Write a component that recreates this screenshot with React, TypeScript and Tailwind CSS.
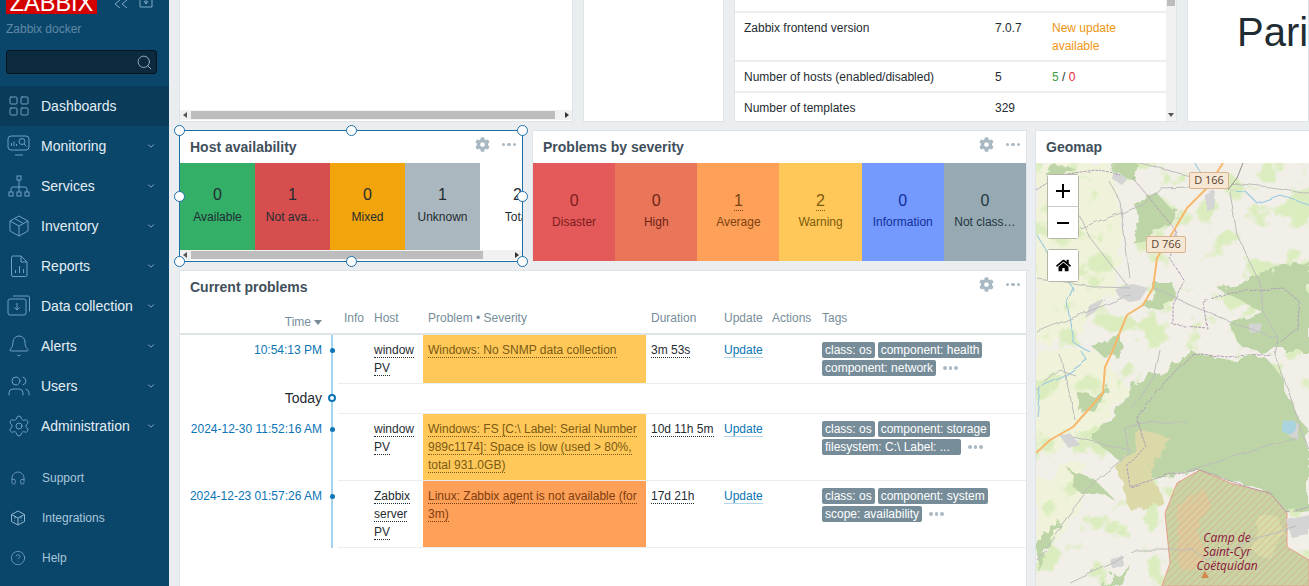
import type { ReactNode } from "react";
import { Bell, ChevronDown, CircleHelp, Headphones, LayoutGrid, Search, Settings, Users } from "lucide-react";
import { FaCog, FaHome } from "react-icons/fa";

const iconColor = "#6f9fc0";

function Monitoring() {
  return (
    <svg width="24" height="24" viewBox="0 0 24 24" fill="none" stroke={iconColor} strokeWidth="1">
      <rect x="1" y="2" width="21" height="14" rx="3" />
      <path d="M8 21h8M4.500 12V9M7 12V7.500M9.500 12v-2" />
      <circle cx="15" cy="7.500" r="3" />
      <path d="M17 10l2.500 2.500" />
    </svg>
  );
}

function ServicesIcon() {
  return (
    <svg width="24" height="24" viewBox="0 0 24 24" fill="none" stroke={iconColor} strokeWidth="1">
      <rect x="10" y="2" width="4" height="4" />
      <rect x="2" y="18" width="4" height="4" />
      <rect x="10" y="18" width="4" height="4" />
      <rect x="18" y="18" width="4" height="4" />
      <path d="M12 6v12M4 18v-3a2 2 0 0 1 2-2h12a2 2 0 0 1 2 2v3" />
    </svg>
  );
}

function InventoryIcon() {
  return (
    <svg width="24" height="24" viewBox="0 0 24 24" fill="none" stroke={iconColor} strokeWidth="1">
      <path d="M12 2l9 5v10l-9 5-9-5V7zM3 7l9 5 9-5M12 12v10M7.500 4.500l9 5" />
    </svg>
  );
}

function ReportsIcon() {
  return (
    <svg width="24" height="24" viewBox="0 0 24 24" fill="none" stroke={iconColor} strokeWidth="1">
      <path d="M6 2h8l6 6v13a1.500 1.500 0 0 1-1.500 1.500h-12.500a1.500 1.500 0 0 1-1.500-1.500v-17.500a1.500 1.500 0 0 1 1.500-1.500zM14 2v6h6M8.500 19v-3M12.500 19v-7M16.500 19v-4" />
    </svg>
  );
}

function DataIcon() {
  return (
    <svg width="24" height="24" viewBox="0 0 24 24" fill="none" stroke={iconColor} strokeWidth="1">
      <rect x="1" y="5" width="18" height="16" rx="2" />
      <path d="M6 2h15a1.500 1.500 0 0 1 1.500 1.500v14M10 9v7M7.500 13.500l2.500 2.500 2.500-2.500" />
    </svg>
  );
}

function IntegrationsIcon() {
  return (
    <svg width="18" height="18" viewBox="0 0 18 18" fill="none" stroke="#8fb5cf" strokeWidth="1">
      <path d="M9 2l6.500 3.500v7L9 16l-6.500-3.500v-7zM2.500 5.500L9 9l6.500-3.500M9 9v7M6 7v2.500M12 7v2.500M5 11.500h.5M12.500 11.500h.5" />
    </svg>
  );
}

const navItems: { label: string; icon: ReactNode; active?: boolean }[] = [
  { label: "Dashboards", icon: <LayoutGrid size={24} color={iconColor} strokeWidth={1} />, active: true },
  { label: "Monitoring", icon: <Monitoring /> },
  { label: "Services", icon: <ServicesIcon /> },
  { label: "Inventory", icon: <InventoryIcon /> },
  { label: "Reports", icon: <ReportsIcon /> },
  { label: "Data collection", icon: <DataIcon /> },
  { label: "Alerts", icon: <Bell size={24} color={iconColor} strokeWidth={1} /> },
  { label: "Users", icon: <Users size={24} color={iconColor} strokeWidth={1} /> },
  { label: "Administration", icon: <Settings size={24} color={iconColor} strokeWidth={1} /> },
];

function Sidebar() {
  return (
    <aside className="flex h-[586px] w-[169px] shrink-0 flex-col bg-[#0a466a]">
      <div className="flex h-[14px] items-start">
        <div className="ml-[6px] flex h-[14px] w-[91px] items-end justify-center overflow-hidden bg-[#d40000]">
          <span className="mb-[-1px] text-[23.5px] leading-none text-white">ZABBIX</span>
        </div>
        <svg className="ml-[17px]" width="14" height="8" viewBox="0 0 14 8" fill="none" stroke="#7ea6c2" strokeWidth="1">
          <path d="M6 0L1 4l5 4M13 0L8 4l5 4" />
        </svg>
        <svg className="ml-[11px]" width="14" height="8" viewBox="0 0 14 8" fill="none" stroke="#7ea6c2" strokeWidth="1">
          <path d="M1 0v7h12V0M7 4V0M5 1l2 3 2-3" />
        </svg>
      </div>
      <div className="ml-[6px] mt-[6px] h-[18px] text-xs leading-[18px] text-[#5f89a6]">Zabbix docker</div>
      <div className="ml-[6px] mt-[12px] flex h-[24px] w-[151px] items-center justify-end rounded-[3px] border border-[#02141f] bg-[#0b2a3e] pr-[3px]">
        <Search size={17} color="#9fb8c9" strokeWidth={1.25} />
      </div>
      <nav className="mt-[12px]">
        {navItems.map((item) => (
          <div key={item.label} className={`flex h-[40px] items-center ${item.active ? "bg-[#093c5b]" : ""}`}>
            <span className="flex w-[41px] shrink-0 justify-center pr-[3px]">{item.icon}</span>
            <span className="flex-1 text-sm text-[#e4eef5]">{item.label}</span>
            {!item.active && <ChevronDown className="mr-[13px]" size={10} color="#9dbcd1" strokeWidth={2} />}
          </div>
        ))}
      </nav>
      <div className="mt-[12px] text-xs text-[#a9c6da]">
        <div className="flex h-[40px] items-center">
          <span className="flex w-[42px] justify-center pr-[6px]"><Headphones size={16} color="#8fb5cf" strokeWidth={1} /></span>
          Support
        </div>
        <div className="flex h-[40px] items-center">
          <span className="flex w-[42px] justify-center pr-[6px]"><IntegrationsIcon /></span>
          Integrations
        </div>
        <div className="flex h-[40px] items-center">
          <span className="flex w-[42px] justify-center pr-[6px]"><CircleHelp size={16} color="#8fb5cf" strokeWidth={1} /></span>
          Help
        </div>
      </div>
    </aside>
  );
}

function Dots({ color = "#a9b9c3" }: { color?: string }) {
  return (
    <span className="flex gap-[2px]">
      <i className="h-[3.500px] w-[3.500px] rounded-full" style={{ background: color }} />
      <i className="h-[3.500px] w-[3.500px] rounded-full" style={{ background: color }} />
      <i className="h-[3.500px] w-[3.500px] rounded-full" style={{ background: color }} />
    </span>
  );
}

function WidgetHead({ title, tools = true }: { title: string; tools?: boolean }) {
  return (
    <div className="flex h-[32px] shrink-0 items-start bg-white pl-[10px]">
      <span className="mt-[8px] flex-1 text-sm font-bold leading-[16px] text-[#3f4f5b]">{title}</span>
      {tools && (
        <span className="mr-[6px] mt-[6px] flex items-center gap-[12px]">
          <FaCog size={15} color="#a9b9c3" />
          <Dots />
        </span>
      )}
    </div>
  );
}

function ScrollArrow({ dir }: { dir: "left" | "right" | "down" }) {
  const cls = {
    left: "border-y-[3px] border-r-[4px] border-y-transparent border-r-[#555]",
    right: "border-y-[3px] border-l-[4px] border-y-transparent border-l-[#333]",
    down: "border-x-[3px] border-t-[4px] border-x-transparent border-t-[#555]",
  }[dir];
  return <i className={`block h-0 w-0 ${cls}`} />;
}

function HScroll({ thumb }: { thumb: string }) {
  return (
    <div className="flex h-[10px] items-center bg-[#f1f1f1] px-[3px]">
      <ScrollArrow dir="left" />
      <div className={`ml-[4px] h-[8px] bg-[#bdbdbd] ${thumb}`} />
      <div className="flex-1" />
      <ScrollArrow dir="right" />
    </div>
  );
}

function TopRow() {
  return (
    <div className="flex h-[122px] shrink-0 gap-[10px] text-xs text-[#1f2c33]">
      <div className="flex w-[394px] flex-col justify-end border border-t-0 border-[#dfe4e7] bg-white">
        <HScroll thumb="w-[364px]" />
        <div className="h-[1px] bg-white" />
      </div>
      <div className="w-[141px] border border-t-0 border-[#dfe4e7] bg-white" />
      <div className="flex w-[443px] border border-t-0 border-[#dfe4e7] bg-white">
        <div className="flex-1">
          <div className="h-[13px] border-b-2 border-[#ebeef0]" />
          <InfoRow h="h-[49px]" name="Zabbix frontend version" value="7.0.7" note={<span className="text-[#ee9512]">New update<br />available</span>} />
          <InfoRow h="h-[31px]" name="Number of hosts (enabled/disabled)" value="5" note={<span><span className="text-[#429e47]">5</span> / <span className="text-[#e5253a]">0</span></span>} />
          <InfoRow h="h-[28px]" name="Number of templates" value="329" last />
        </div>
        <div className="flex w-[10px] flex-col items-center justify-between bg-[#f1f1f1] pb-[4px]">
          <div className="h-[6px] w-[8px] bg-[#bdbdbd]" />
          <ScrollArrow dir="down" />
        </div>
      </div>
      <div className="flex-1 overflow-hidden border border-t-0 border-[#dfe4e7] bg-white pl-[49px] pt-[8px]">
        <span className="text-[40px] leading-[48px] text-[#1f2c33]">Pari</span>
      </div>
    </div>
  );
}

function InfoRow({ h, name, value, note, last }: { h: string; name: string; value: string; note?: ReactNode; last?: boolean }) {
  return (
    <div className={`flex ${h} pl-[9px] pt-[6px] leading-[18px] ${last ? "" : "border-b-2 border-[#ebeef0]"}`}>
      <span className="w-[251px]">{name}</span>
      <span className="w-[57px]">{value}</span>
      <span>{note}</span>
    </div>
  );
}

const availability = [
  { n: 0, label: "Available", bg: "bg-[#34af67]" },
  { n: 1, label: "Not ava…", bg: "bg-[#d64e4e]" },
  { n: 0, label: "Mixed", bg: "bg-[#f2a50a]" },
  { n: 1, label: "Unknown", bg: "bg-[#abb7be]" },
  { n: 2, label: "Total", bg: "bg-white" },
];

function Handle({ className }: { className: string }) {
  return <i className={`absolute z-10 block h-[11px] w-[11px] rounded-full border border-[#1f6ea8] bg-white ${className}`} />;
}

function HostAvailability() {
  return (
    <div className="relative flex h-[132px] w-[344px] shrink-0 flex-col border border-[#1f6ea8] bg-white">
      <Handle className="-left-[6px] -top-[6px]" />
      <Handle className="left-[166px] -top-[6px]" />
      <Handle className="-right-[6px] -top-[6px]" />
      <Handle className="-left-[6px] top-[60px]" />
      <Handle className="-right-[6px] top-[60px]" />
      <Handle className="-left-[6px] -bottom-[6px]" />
      <Handle className="left-[166px] -bottom-[6px]" />
      <Handle className="-right-[6px] -bottom-[6px]" />
      <WidgetHead title="Host availability" />
      <div className="flex h-[87px] overflow-hidden">
        {availability.map((a) => (
          <div key={a.label} className={`flex w-[75px] shrink-0 flex-col items-center pt-[22px] text-[#1f2c33] ${a.bg}`}>
            <span className="text-base leading-[20px]">{a.n}</span>
            <span className="mt-[3px] text-xs leading-[18px]">{a.label}</span>
          </div>
        ))}
      </div>
      <HScroll thumb="w-[292px]" />
      <div className="h-[1px] bg-white" />
    </div>
  );
}

const severities = [
  { n: 0, label: "Disaster", bg: "bg-[#e45959]", text: "text-[#7c1d1d]" },
  { n: 0, label: "High", bg: "bg-[#e97659]", text: "text-[#6e2415]" },
  { n: 1, label: "Average", bg: "bg-[#ffa059]", text: "text-[#7a4310]", line: true },
  { n: 2, label: "Warning", bg: "bg-[#ffc859]", text: "text-[#7d5a0c]", line: true },
  { n: 0, label: "Information", bg: "bg-[#7499ff]", text: "text-[#12309a]" },
  { n: 0, label: "Not class…", bg: "bg-[#97aab3]", text: "text-[#24363f]" },
];

function ProblemsBySeverity() {
  return (
    <div className="flex h-[131px] flex-1 flex-col border border-b-0 border-[#dfe4e7] bg-white">
      <WidgetHead title="Problems by severity" />
      <div className="grid flex-1 grid-cols-6">
        {severities.map((s) => (
          <div key={s.label} className={`flex flex-col items-center pt-[28px] ${s.bg} ${s.text}`}>
            <span className={`h-[20px] text-base leading-[19px] ${s.line ? "border-b border-dotted border-current" : ""}`}>{s.n}</span>
            <span className="mt-[2px] text-xs leading-[18px]">{s.label}</span>
          </div>
        ))}
      </div>
    </div>
  );
}

const rowGrid = "grid grid-cols-[147px_11px_31px_54px_223px_73px_48px_50px_1fr]";

type Problem = {
  time: string;
  host: string[];
  text: string;
  bg: string;
  ink: string;
  duration: string;
  tags: { label: string; w?: string }[][];
};

const problems: Problem[] = [
  {
    time: "10:54:13 PM",
    host: ["window", "PV"],
    text: "Windows: No SNMP data collection",
    bg: "bg-[#ffc859]",
    ink: "text-[#7a5a12] border-[#7a5a12]",
    duration: "3m 53s",
    tags: [[{ label: "class: os" }, { label: "component: health" }], [{ label: "component: network" }]],
  },
  {
    time: "2024-12-30 11:52:16 AM",
    host: ["window", "PV"],
    text: "Windows: FS [C:\\ Label: Serial Number 989c1174]: Space is low (used > 80%, total 931.0GB)",
    bg: "bg-[#ffc859]",
    ink: "text-[#7a5a12] border-[#7a5a12]",
    duration: "10d 11h 5m",
    tags: [[{ label: "class: os" }, { label: "component: storage" }], [{ label: "filesystem: C:\\ Label: ...", w: "w-[139px]" }]],
  },
  {
    time: "2024-12-23 01:57:26 AM",
    host: ["Zabbix", "server", "PV"],
    text: "Linux: Zabbix agent is not available (for 3m)",
    bg: "bg-[#ffa059]",
    ink: "text-[#7c3c0c] border-[#7c3c0c]",
    duration: "17d 21h",
    tags: [[{ label: "class: os" }, { label: "component: system" }], [{ label: "scope: availability" }]],
  },
];

function Timeline({ dot }: { dot: "small" | "ring" }) {
  return (
    <div className="relative">
      <i className="absolute bottom-0 left-[4px] top-0 block w-[2px] bg-[#a3d3ef]" />
      {dot === "small" ? (
        <i className="absolute left-[2.500px] top-[12.500px] block h-[5px] w-[5px] rounded-full bg-[#0b75b5]" />
      ) : (
        <i className="absolute left-[1px] top-[10px] block h-[8px] w-[8px] rounded-full border-2 border-[#0b75b5] bg-white" />
      )}
    </div>
  );
}

function ProblemRow({ p }: { p: Problem }) {
  const cell = "pt-[6px] pb-[6px] pl-[5px] border-b border-[#ebeef0]";
  return (
    <div className={`${rowGrid} text-xs leading-[18px] text-[#1f2c33]`}>
      <div className="pr-[5px] pt-[6px] text-right text-[#0b75b5]">{p.time}</div>
      <Timeline dot="small" />
      <div className="border-b border-[#ebeef0]" />
      <div className={cell}>
        {p.host.map((h) => (
          <div key={h}><span className="border-b border-dotted border-[#1f2c33]">{h}</span></div>
        ))}
      </div>
      <div className={`${cell} ${p.bg}`}>
        <span className={`border-b border-dotted ${p.ink}`}>{p.text}</span>
      </div>
      <div className={cell}><span className="whitespace-nowrap border-b border-dotted border-[#1f2c33]">{p.duration}</span></div>
      <div className={cell}><span className="border-b border-[#b7d3e6] text-[#0b75b5]">Update</span></div>
      <div className="border-b border-[#ebeef0]" />
      <div className={`${cell} pl-[4px] pt-[7px]`}>
        <Tags rows={p.tags} />
      </div>
    </div>
  );
}

function Tags({ rows }: { rows: { label: string; w?: string }[][] }) {
  return (
    <div className="flex flex-col gap-[2px]">
      {rows.map((row, i) => (
        <div key={i} className="flex items-center gap-[3px]">
          {row.map((t) => (
            <span key={t.label} className={`h-[16px] whitespace-nowrap rounded-[2px] bg-[#768d99] px-[3px] leading-[16px] text-white ${t.w ?? ""}`}>
              {t.label}
            </span>
          ))}
          {i === 1 && <span className="ml-[4px]"><Dots /></span>}
        </div>
      ))}
    </div>
  );
}

function CurrentProblems() {
  return (
    <div className="flex-1 overflow-hidden border border-b-0 border-[#dfe4e7] bg-white">
      <WidgetHead title="Current problems" />
      <div className={`${rowGrid} h-[32px] border-b-2 border-[#dfe4e7] pt-[7px] text-xs leading-[16px] text-[#768d99]`}>
        <div className="flex items-center justify-end gap-[3px] pr-[5px]">
          Time
          <i className="mt-[1px] block h-0 w-0 border-x-[4px] border-t-[5px] border-x-transparent border-t-[#768d99]" />
        </div>
        <div />
        <div className="pl-[6px]">Info</div>
        <div className="pl-[5px]">Host</div>
        <div className="pl-[5px]">Problem • Severity</div>
        <div className="pl-[5px]">Duration</div>
        <div className="pl-[5px]">Update</div>
        <div className="pl-[5px]">Actions</div>
        <div className="pl-[5px]">Tags</div>
      </div>
      <ProblemRow p={problems[0]} />
      <div className={`${rowGrid} h-[30px]`}>
        <div className="pr-[5px] pt-[5px] text-right text-sm leading-[18px] text-[#1f2c33]">Today</div>
        <Timeline dot="ring" />
        <div className="col-span-7 border-b border-[#ebeef0]" />
      </div>
      <ProblemRow p={problems[1]} />
      <ProblemRow p={problems[2]} />
    </div>
  );
}

const forests = [
  "1193,353 1230,360 1263,355 1277,370 1287,393 1297,417 1309,430 1309,510 1287,513 1277,507 1263,490 1233,482 1200,470 1173,475 1130,487 1127,467 1090,437 1117,413 1130,387 1163,370",
  "1217,288 1240,283 1262,272 1309,262 1309,350 1262,350 1240,345 1230,325 1262,312 1240,300",
  "1135,205 1157,193 1170,208 1183,215 1165,225 1150,235 1148,243 1130,240 1140,222",
  "1140,303 1158,295 1150,280 1170,280 1178,295 1163,310",
  "1105,358 1125,350 1122,335 1090,345",
  "1078,392 1095,395 1110,385 1098,410 1080,412",
  "1070,470 1095,480 1115,500 1095,495 1075,490",
  "1036,540 1060,520 1048,550 1036,570",
  "1100,585 1130,565 1120,586",
  "1120,163 1140,163 1133,178 1112,172",
  "1050,165 1075,168 1065,176 1045,175",
];

const meadows = [
  "1036,163 1110,163 1125,240 1115,290 1080,330 1036,345",
  "1036,350 1095,350 1130,390 1090,435 1036,455",
  "1036,480 1085,460 1080,510 1036,560",
];

const greyRoads = [
  "M1037 278 L1100 287 L1130 288",
  "M1080 228 L1143 205 L1160 188 L1190 187",
  "M1230 183 L1270 187 L1309 193",
  "M1110 182 L1120 202 L1130 278",
  "M1073 202 L1090 238 L1127 285",
  "M1153 288 L1237 325 L1277 338",
  "M1230 192 L1237 235 L1260 282 L1263 312 L1278 338 L1275 355",
  "M1037 332 L1097 308 L1130 295",
  "M1273 350 L1297 417 L1309 450",
  "M1037 560 L1070 513 L1093 483 L1130 453 L1125 430 L1140 422 L1187 422",
  "M1073 437 L1130 450",
  "M1070 583 L1113 563 L1137 550 L1193 550 L1207 560",
  "M1183 472 L1297 438",
  "M1207 560 L1250 540 L1297 527",
  "M1140 163 L1190 176",
  "M1060 355 L1071 400 L1075 420",
  "M1036 390 L1060 370 L1075 375",
  "M1160 350 L1155 375 L1132 410",
];

const rivers = [
  "M1230 190 L1245 191 L1257 203 L1280 195 L1309 205",
  "M1037 235 L1050 258 L1073 288 L1067 302 L1073 342 L1090 352",
  "M1080 350 L1087 360 L1063 377 L1040 387 L1037 417",
  "M1195 163 L1200 172",
];

const boundaries = [
  "M1133 178 L1177 232 L1170 258 L1185 282 L1173 305 L1173 325 L1207 328 L1203 302 L1230 292 L1283 288 L1300 302 L1297 328 L1277 345",
  "M1193 353 L1227 357 L1270 353",
  "M1193 353 L1157 390 L1137 420 L1145 447 L1127 467 L1130 487 L1173 473 L1200 470 L1233 482 L1270 493 L1287 513 L1309 507",
  "M1036 190 L1060 175 L1095 170 L1120 175",
];

const towns = [
  "1115,290 1130,283 1148,288 1140,300 1130,302 1120,298",
  "1205,195 1215,190 1213,208 1205,210",
  "1115,172 1128,178 1122,185 1113,180",
  "1060,436 1070,433 1080,445 1068,448",
  "1110,558 1122,555 1126,568 1112,568",
  "1290,420 1300,425 1298,440 1288,435",
  "1287,520 1309,515 1309,535 1292,538",
  "1250,325 1262,323 1260,332 1250,333",
  "1090,305 1105,298 1095,312 1085,318",
];

function MapArt() {
  return (
    <svg className="absolute inset-0 h-full w-full" viewBox="1036 163 273 423" preserveAspectRatio="none" fill="none">
      <defs>
        <pattern id="hatch" width="5" height="5" patternUnits="userSpaceOnUse" patternTransform="rotate(-45)">
          <line x1="0" y1="0" x2="5" y2="0" stroke="#d98f7f" strokeWidth="0.7" />
        </pattern>
        <filter id="rough" filterUnits="userSpaceOnUse" x="1036" y="163" width="273" height="423" colorInterpolationFilters="sRGB">
          <feTurbulence type="fractalNoise" baseFrequency="0.07" numOctaves="3" seed="7" />
          <feDisplacementMap in="SourceGraphic" scale="14" />
          <feGaussianBlur stdDeviation="0.5" />
        </filter>
        <filter id="wobble" filterUnits="userSpaceOnUse" x="1036" y="163" width="273" height="423" colorInterpolationFilters="sRGB">
          <feTurbulence type="fractalNoise" baseFrequency="0.05" numOctaves="2" seed="3" />
          <feDisplacementMap in="SourceGraphic" scale="5" />
          <feGaussianBlur stdDeviation="0.3" />
        </filter>
        <filter id="patches" filterUnits="userSpaceOnUse" x="1036" y="163" width="273" height="423" colorInterpolationFilters="sRGB">
          <feTurbulence type="fractalNoise" baseFrequency="0.035" numOctaves="4" seed="11" />
          <feColorMatrix values="0 0 0 0 0.86  0 0 0 0 0.93  0 0 0 0 0.75  9 0 0 0 -5" />
          <feGaussianBlur stdDeviation="0.4" />
        </filter>
      </defs>
      <rect x="1036" y="163" width="273" height="423" fill="#f2efe9" />
      <g filter="url(#rough)">
        {meadows.map((p) => <polygon key={p} points={p} fill="#f0f3da" />)}
      </g>
      <rect x="1036" y="163" width="273" height="423" filter="url(#patches)" fill="#fff" />
      <g filter="url(#rough)">
        {forests.map((p) => <polygon key={p} points={p} fill="#bdd5a6" />)}
        <polygon points="1118,470 1145,430 1170,438 1150,470 1165,505 1130,510" fill="#dcd9a8" />
      </g>
      <polygon points="1165,513 1177,483 1200,470 1230,483 1270,493 1287,513 1287,547 1309,560 1309,586 1162,586 1170,563" fill="#c9d3a3" stroke="#e8a08c" strokeWidth="1" />
      <g filter="url(#rough)">
        <polygon points="1178,505 1205,490 1215,510 1195,530 1210,560 1180,570" fill="#dccb9c" />
        <polygon points="1262,518 1278,515 1285,535 1270,560 1250,550" fill="#d8dca8" />
      </g>
      <polygon points="1165,513 1177,483 1200,470 1230,483 1270,493 1287,513 1287,547 1309,560 1309,586 1162,586 1170,563" fill="url(#hatch)" />
      <g filter="url(#wobble)">
        {towns.map((p) => <polygon key={p} points={p} fill="#d4d4d4" />)}
        <rect x="1281" y="420" width="15" height="13" rx="5" fill="#aad3df" />
        {rivers.map((d) => <path key={d} d={d} stroke="#9ccbe2" strokeWidth="1.200" strokeLinejoin="round" />)}
        {greyRoads.map((d) => <path key={d} d={d} stroke="#bcbcbc" strokeWidth="1" strokeLinejoin="round" />)}
        {boundaries.map((d) => <path key={d} d={d} stroke="#b09cb6" strokeWidth="1" strokeDasharray="3 1" strokeLinejoin="round" />)}
      </g>
      <path d="M1223 163 L1207 188 L1187 208 L1173 232 L1157 258 L1153 288 L1143 305 L1127 315 L1120 332 L1113 350 L1105 367 L1103 393 L1073 427 L1050 440 L1036 453" stroke="#f7b86c" strokeWidth="2" strokeLinejoin="round" />
      <path d="M1243 163 L1237 178 L1228 190" stroke="#777" strokeWidth="0.800" />
      <polygon points="1205,571 1209,578 1201,578" fill="#d08a4e" />
    </svg>
  );
}

function RoadLabel({ text, className }: { text: string; className: string }) {
  return (
    <span className={`absolute flex h-[17px] w-[40px] items-center justify-center rounded-[2px] border border-[#d9b48e] bg-[#f6e6d4] font-['Open_Sans',sans-serif] text-[11px] text-[#59452f] ${className}`}>
      {text}
    </span>
  );
}

function Geomap() {
  const btn = "flex h-[31px] w-[30px] items-center justify-center bg-white text-black";
  return (
    <div className="flex flex-1 flex-col overflow-hidden border border-r-0 border-b-0 border-[#dfe4e7] bg-white">
      <WidgetHead title="Geomap" tools={false} />
      <div className="relative flex-1 overflow-hidden">
        <MapArt />
        <RoadLabel text="D 166" className="left-[153px] top-[9px]" />
        <RoadLabel text="D 766" className="left-[110px] top-[73px]" />
        <div className="absolute left-[11px] top-[11px] flex w-[32px] flex-col rounded-[3px] border border-[#b5b5a8] bg-white">
          <div className={btn}>
            <svg width="14" height="14" viewBox="0 0 14 14" stroke="#000" strokeWidth="2"><path d="M7 0v14M0 7h14" /></svg>
          </div>
          <div className="h-[1px] bg-[#ccc]" />
          <div className={btn}>
            <svg width="14" height="14" viewBox="0 0 14 14" stroke="#000" strokeWidth="2"><path d="M1 7h12" /></svg>
          </div>
        </div>
        <div className="absolute left-[11px] top-[86px] flex w-[32px] rounded-[3px] border border-[#b5b5a8] bg-white">
          <div className={btn}><FaHome size={15} /></div>
        </div>
        <div className="absolute left-[151px] top-[368px] w-[80px] text-center font-['Open_Sans',sans-serif] text-xs italic leading-[14px] text-[#8a1538]">
          Camp de<br />Saint-Cyr<br />Coëtquidan
        </div>
      </div>
    </div>
  );
}

export default function App() {
  return (
    <div className="flex h-[586px] w-[1309px] overflow-hidden bg-[#ebeef0] font-['Liberation_Sans',Arial,sans-serif]">
      <Sidebar />
      <main className="flex min-w-0 flex-1 flex-col pl-[10px]">
        <TopRow />
        <div className="flex min-h-0 flex-1 gap-[8px] pt-[8px]">
          <div className="flex w-[848px] shrink-0 flex-col gap-[8px]">
            <div className="flex gap-[9px]">
              <HostAvailability />
              <ProblemsBySeverity />
            </div>
            <CurrentProblems />
          </div>
          <Geomap />
        </div>
      </main>
    </div>
  );
}
